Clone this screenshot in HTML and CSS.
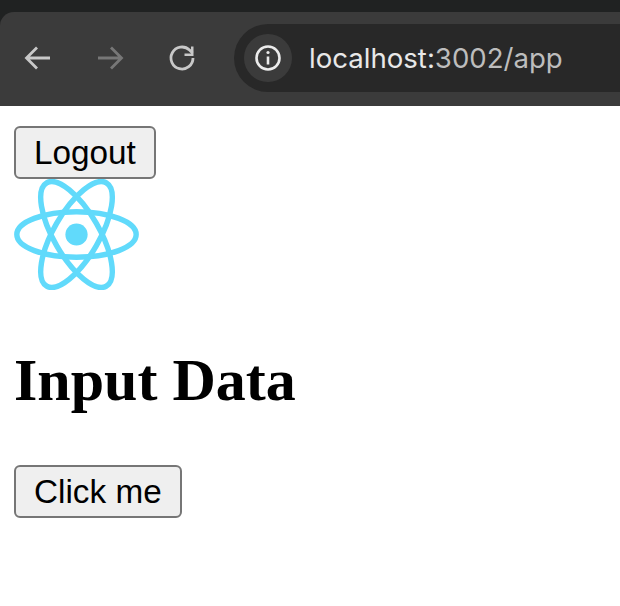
FILE: index.html
```html
<!DOCTYPE html>
<html lang="en">
<head>
<meta charset="utf-8">
<title>localhost:3002/app</title>
<link rel="stylesheet" href="styles.css">
</head>
<body>
<div class="chrome">
  <div class="toolbar">
    <svg class="nav nav-back" viewBox="0 0 28 28"><path d="M26 14H3M13 3.500L2.500 14L13 24.500"/></svg>
    <svg class="nav nav-forward" viewBox="0 0 28 28"><path d="M2 14H25M15 3.500L25.500 14L15 24.500"/></svg>
    <svg class="nav nav-reload" viewBox="0 0 28 28"><path d="M25 14A11 11 0 1 1 21.500 6L24.500 9"/><path class="solid" d="M25.500 2.500V12H16.500V9.500H23V2.500Z"/></svg>
    <div class="omnibox">
      <div class="site-info">
        <svg class="info" viewBox="0 0 28 28"><circle cx="14" cy="14" r="11.500"/><path d="M14 12.500V20.500"/><circle class="dot" cx="14" cy="8.500" r="1.600"/></svg>
      </div>
      <span class="url">localhost:<span class="url-path">3002/app</span></span>
    </div>
  </div>
</div>
<main class="page">
  <button class="btn" type="button">Logout</button>
  <svg class="logo" viewBox="-11.5 -10.23 23 20.46">
    <circle class="logo-core" r="2.05"/>
    <g class="logo-orbits">
      <ellipse rx="11" ry="4.2"/>
      <ellipse rx="11" ry="4.2" transform="rotate(60)"/>
      <ellipse rx="11" ry="4.2" transform="rotate(120)"/>
    </g>
  </svg>
  <h1 class="title">Input Data</h1>
  <button class="btn" type="button">Click me</button>
</main>
</body>
</html>
```
FILE: styles.css
```css
html, body {
  margin: 0;
  padding: 0;
  background: #fff;
}
body {
  width: 620px;
  height: 606px;
  overflow: hidden;
}
.chrome {
  background: #202222;
  padding-top: 12px;
}
.toolbar {
  height: 94px;
  box-sizing: border-box;
  background: #3b3b3b;
  border-top-left-radius: 14px;
  display: flex;
  align-items: flex-start;
  padding: 12px 0 0 24px;
}
.nav {
  width: 28px;
  height: 28px;
  flex: none;
  fill: none;
  stroke-width: 2.8;
  margin-top: 20px;
}
.nav-back { stroke: #c8c8c8; margin-right: 44px; }
.nav-forward { stroke: #777; margin-right: 44px; }
.nav-reload { stroke: #c8c8c8; margin-right: 38px; }
.nav-reload .solid { fill: #c8c8c8; stroke: none; }
.omnibox {
  flex: 1;
  height: 68px;
  background: #282828;
  border-radius: 34px 0 0 34px;
  display: flex;
  align-items: center;
  padding-left: 10px;
}
.site-info {
  width: 48px;
  height: 48px;
  border-radius: 50%;
  background: #3b3b3b;
  display: flex;
  align-items: center;
  justify-content: center;
  flex: none;
}
.info {
  width: 28px;
  height: 28px;
  fill: none;
  stroke: #ececec;
  stroke-width: 2.6;
}
.info .dot { fill: #ececec; stroke: none; }
.url {
  margin-left: 17px;
  font-family: Inter, "Liberation Sans", sans-serif;
  font-size: 27.6px;
  color: #e8e8e8;
  white-space: nowrap;
}
.url-path { color: #bdbdbd; }
.page {
  padding: 20px 14px 0;
  display: flex;
  flex-direction: column;
  align-items: flex-start;
}
.btn {
  font-family: "Liberation Sans", Arial, sans-serif;
  font-size: 33.3px;
  line-height: 38px;
  color: #000;
  background: #efefef;
  border: 2px solid #767676;
  border-radius: 6px;
  padding: 6px 18px;
  height: 53px;
  box-sizing: border-box;
  margin: 0;
}
.logo {
  width: 125px;
  height: 111px;
  display: block;
}
.logo-core { fill: #61dafb; }
.logo-orbits { fill: none; stroke: #61dafb; stroke-width: 1; }
.title {
  font-family: "Liberation Serif", "Times New Roman", serif;
  font-size: 60px;
  line-height: 66px;
  font-weight: 700;
  color: #000;
  margin: 57px 0 52px;
}
```
